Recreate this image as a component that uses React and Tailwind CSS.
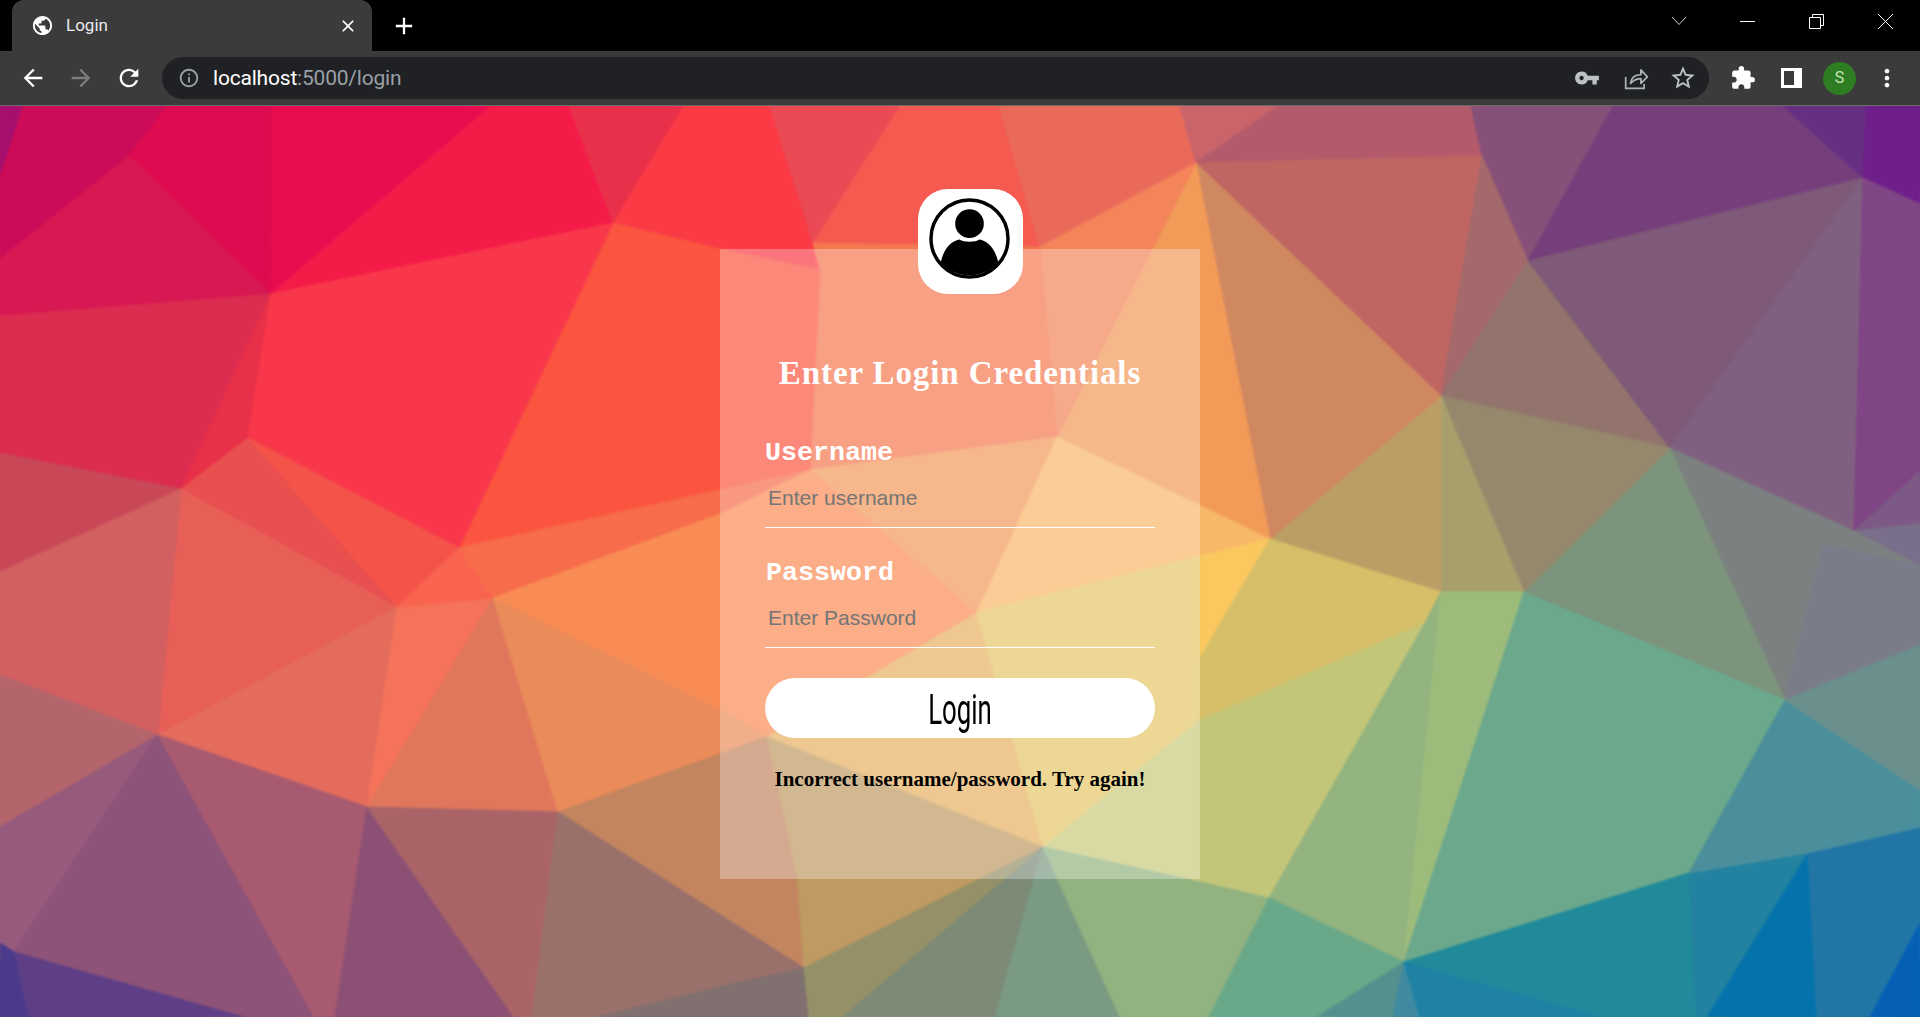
import { MdArrowBack, MdArrowForward, MdRefresh, MdInfoOutline, MdVpnKey, MdStarBorder, MdExtension, MdMoreVert, MdPublic, MdClose, MdAdd } from 'react-icons/md'

// low poly wallpaper, coordinates are page pixels (viewBox starts below the browser toolbar)
const POLYS = [
  ['0,106 168,106 129,156 0,259', '#cc0c58'],
  ['0,106 22,106 0,175', '#a5106f'],
  ['168,106 273,106 271,294 129,156', '#df0b50'],
  ['273,106 491,106 271,294', '#e80d4f'],
  ['0,259 129,156 271,294 0,316', '#d71853'],
  ['491,106 569,106 613,223 271,294', '#f51b49'],
  ['569,106 684,106 613,223', '#e9304b'],
  ['684,106 770,106 813,243 820,270 720,249 613,223', '#fa3a45'],
  ['770,106 900,106 813,243', '#e94a54'],
  ['900,106 999,106 1040,247 813,243', '#f45a50'],
  ['999,106 1180,106 1196,163 1040,247', '#ea6a5a'],
  ['1180,106 1278,106 1196,163', '#c8646a'],
  ['1278,106 1471,106 1482,156 1196,163', '#b45b6b'],
  ['1471,106 1613,106 1528,261 1482,156', '#875079'],
  ['1613,106 1783,106 1863,178 1528,261', '#763f7c'],
  ['1783,106 1866,106 1863,178', '#672f82'],
  ['1866,106 1920,106 1920,204 1863,178', '#6f1f8a'],
  ['1196,163 1482,156 1441,396', '#bf6663'],
  ['1482,156 1528,261 1441,396', '#a4696a'],
  ['1528,261 1670,448 1441,396', '#93746c'],
  ['1528,261 1863,178 1670,448', '#7e5a78'],
  ['1863,178 1854,531 1670,448', '#806080'],
  ['1863,178 1920,204 1920,471 1854,531', '#7f4585'],
  ['1854,531 1920,471 1920,524', '#7d5a85'],
  ['1854,531 1920,524 1920,566', '#7a6f8a'],
  ['1670,448 1854,531 1920,566 1920,645 1785,700', '#7c8080'],
  ['1824,545 1920,566 1920,645 1785,700', '#7a7c8a'],
  ['1670,448 1785,700 1524,592', '#7c937c'],
  ['1441,396 1670,448 1524,592', '#95886c'],
  ['1441,396 1524,592 1441,592', '#a89f6c'],
  ['1441,396 1441,592 1270,539', '#bb9e65'],
  ['1196,163 1441,396 1270,539', '#d08860'],
  ['1196,163 1270,539 1057,437', '#f29a58'],
  ['1040,247 1196,163 1057,437', '#f4845a'],
  ['1040,247 813,243 820,270 810,470 1057,437', '#f47850'],
  ['810,470 1057,437 977,613', '#f4995b'],
  ['1057,437 1270,539 977,613', '#f7b868'],
  ['613,223 720,249 820,270 810,470 459,548', '#fb5540'],
  ['0,316 271,294 248,438 181,489 0,453', '#dc2c50'],
  ['271,294 248,438 181,489', '#e83048'],
  ['271,294 613,223 459,548 248,438', '#f8384a'],
  ['0,453 181,489 0,572', '#c94858'],
  ['181,489 248,438 397,607', '#e84f4f'],
  ['248,438 459,548 397,607', '#f4534a'],
  ['181,489 397,607 158,735', '#e85f58'],
  ['181,489 158,735 0,675 0,572', '#d26060'],
  ['158,735 397,607 367,807', '#e36c5d'],
  ['397,607 493,598 367,807', '#f5735a'],
  ['367,807 493,598 558,812', '#e0775c'],
  ['459,548 493,598 397,607', '#f9644f'],
  ['459,548 810,470 720,514 493,598', '#f76c4a'],
  ['493,598 720,514 810,470 977,613 767,737 720,710', '#f98c55'],
  ['493,598 720,710 767,737 558,812', '#ea8b5a'],
  ['767,737 977,613 1043,847', '#e7b160'],
  ['977,613 1200,556 1200,720 1043,847', '#e6c668'],
  ['1043,847 1200,720 1200,882', '#c9ca7c'],
  ['1270,539 1200,556 1200,658', '#fbc860'],
  ['1270,539 1441,592 1425,623 1200,720 1200,658', '#d6bf68'],
  ['1200,720 1425,623 1269,898 1200,882', '#c3c678'],
  ['1425,623 1441,592 1404,962 1269,898', '#93b37f'],
  ['1441,592 1524,592 1404,962', '#9dbc7c'],
  ['1524,592 1785,700 1689,873 1404,962', '#6ca88c'],
  ['558,812 767,737 797,873 804,968', '#c2855f'],
  ['767,737 1043,847 804,968 797,873', '#bf9a62'],
  ['0,675 158,735 0,827', '#b4656c'],
  ['0,827 158,735 14,952 0,943', '#955a7c'],
  ['158,735 314,1017 243,1017 14,952', '#8d5379'],
  ['158,735 367,807 335,1017 314,1017', '#a85a70'],
  ['367,807 514,1017 335,1017', '#8c5075'],
  ['367,807 558,812 532,1017 514,1017', '#aa6468'],
  ['558,812 804,968 720,987 597,1017 532,1017', '#9a706b'],
  ['597,1017 720,987 804,968 809,1017', '#80706f'],
  ['14,952 243,1017 28,1017', '#5e3f85'],
  ['0,943 14,952 28,1017 0,1017', '#4b3a8c'],
  ['804,968 1043,847 843,1017 809,1017', '#959068'],
  ['1043,847 995,1017 843,1017', '#7c8a76'],
  ['1043,847 1120,1017 995,1017', '#7b9a82'],
  ['1043,847 1200,882 1269,898 1209,1017 1120,1017', '#92b380'],
  ['1269,898 1404,962 1317,1017 1209,1017', '#69a888'],
  ['1404,962 1393,1017 1317,1017', '#55908f'],
  ['1404,962 1420,1017 1393,1017', '#3f8aa0'],
  ['1404,962 1689,873 1696,1017 1420,1017', '#208a9a'],
  ['1404,962 1600,1017 1420,1017', '#1f82a5'],
  ['1689,873 1808,853 1707,1017 1696,1017', '#23829f'],
  ['1808,853 1817,1017 1707,1017', '#0573ab'],
  ['1808,853 1920,827 1920,923 1870,1017 1817,1017', '#2176a6'],
  ['1920,923 1920,1017 1870,1017', '#0560b5'],
  ['1785,700 1920,790 1920,827 1808,853 1689,873', '#4b8f9c'],
  ['1785,700 1920,645 1920,790', '#6b8f8c'],
]

const Shards = () => POLYS.map(([points, fill]) => (
  <polygon key={points} points={points} fill={fill} stroke={fill} strokeWidth="1" />
))

// svg is 4px oversize, with a stretched copy under the real one, so the blur doesn't fade at the page edge
const Wallpaper = () => (
  <svg className="absolute -left-[4px] -top-[4px] w-[calc(100%+8px)] h-[calc(100%+8px)] blur-[1px]" viewBox="-4 102 1928 919">
    <g transform="translate(960 561) scale(1.02) translate(-960 -561)"><Shards /></g>
    <Shards />
  </svg>
)

const ShareIcon = () => (
  <svg width="26" height="26" viewBox="0 0 24 24" fill="none" stroke="#aeb2b6" strokeWidth="1.6">
    <path d="M2.500 11v10.500h17v-4" />
    <path d="M7 17c.5-5 4-8 9.500-8V4.500l6 6.500-6 6v-4.500c-4 0-7 1.500-9.500 4.500z" strokeLinejoin="round" />
  </svg>
)

const BrowserChrome = () => (
  <div className="shrink-0 bg-[#3b3b3b]">
    <div className="h-[51px] bg-black flex items-end">
      <div className="ml-[12px] w-[360px] h-[51px] bg-[#3b3b3b] rounded-t-[12px] flex items-center pl-[19px] pr-[14px] gap-[12px]">
        <MdPublic className="text-white" size={23} />
        <span className="flex-1 text-[17px] text-[#e8eaed] font-['Roboto',sans-serif]">Login</span>
        <MdClose className="text-white" size={20} />
      </div>
      <div className="w-[64px] h-[51px] flex items-center justify-center">
        <MdAdd className="text-white" size={28} />
      </div>
      <div className="flex-1 h-full flex items-center justify-end pb-[9px]">
        <svg className="mr-[53px]" width="16" height="10" viewBox="0 0 16 10" fill="none" stroke="#ccc"><path d="M1 1l7 7.500L15 1" /></svg>
        <span className="w-[15px] h-px bg-white mr-[54px]" />
        <svg className="mr-[54px]" width="15" height="15" viewBox="0 0 15 15" fill="none" stroke="#fff"><path d="M.5 3.500h11v11H.5z" /><path d="M3.500 3.500v-3h11v11h-3" /></svg>
        <svg className="mr-[27px]" width="15" height="15" viewBox="0 0 15 15" fill="none" stroke="#fff"><path d="M0 0l15 15M15 0L0 15" /></svg>
      </div>
    </div>
    <div className="h-[55px] flex items-center border-b border-[#8a8a8a]/60">
      <div className="w-[162px] flex items-center pl-[19px] gap-[20px]">
        <MdArrowBack className="text-white" size={28} />
        <MdArrowForward className="text-[#7d7d7d]" size={28} />
        <MdRefresh className="text-white" size={28} />
      </div>
      <div className="w-[1547px] h-[42px] rounded-full bg-[#202124] flex items-center pl-[16px] pr-[12px]">
        <MdInfoOutline className="text-[#9aa0a6]" size={22} />
        <span className="ml-[13px] flex-1 pt-[1px] text-[21px] tracking-[-0.2px] text-[#9aa0a6] font-['Roboto',sans-serif]">
          <span className="text-white">localhost</span>:5000/login
        </span>
        <MdVpnKey className="text-[#bdc1c6]" size={26} />
        <span className="ml-[23px] mr-[20px]"><ShareIcon /></span>
        <MdStarBorder className="text-[#bdc1c6]" size={28} />
      </div>
      <div className="flex-1 flex items-center pl-[21px]">
        <MdExtension className="text-white" size={26} />
        <span className="ml-[25px] w-[21px] h-[20px] border-[3px] border-white border-r-[8px]" />
        <span className="ml-[21px] w-[33px] h-[33px] rounded-full bg-[#2e7d23] text-[#c8e6b8] text-[16px] flex items-center justify-center font-['Roboto',sans-serif]">S</span>
        <MdMoreVert className="text-white ml-[17px]" size={28} />
      </div>
    </div>
  </div>
)

const Field = ({ label, placeholder, labelClass }) => (
  <div>
    <div className={`font-['Liberation_Mono',monospace] font-bold text-[26.67px] leading-[30px] text-white ${labelClass}`}>{label}</div>
    <input
      readOnly
      placeholder={placeholder}
      className="mt-[1px] block w-full h-[59px] pl-[3px] pb-[1px] border-b border-white bg-transparent outline-none text-[21px] font-['Liberation_Sans',sans-serif] placeholder-[#757575]"
    />
  </div>
)

const App = () => (
  <div className="h-[1017px] overflow-hidden flex flex-col">
    <BrowserChrome />
    <main className="relative flex-1 flex justify-center pt-[143px] overflow-hidden">
      <Wallpaper />
      <div className="relative w-[480px] h-[630px] bg-white/30 px-[45px] pt-[104px]">
        <div className="absolute -top-[60px] left-[198px] w-[105px] h-[105px] bg-white rounded-[30px] pl-[11px] pt-[9px]">
          <svg width="81" height="81" viewBox="0 0 82 82">
            <circle cx="41" cy="41" r="39" fill="#fff" stroke="#000" strokeWidth="3.500" />
            <circle cx="41" cy="26" r="14.500" />
            <path d="M12 65C15 50 24 43 31 42C35 45 47 45 51 42C58 43 67 50 70 65A38 38 0 0 1 12 65Z" />
          </svg>
        </div>
        <h1 className="text-center font-['Liberation_Serif',serif] font-bold text-[33px] leading-[40px] tracking-[0.9px] text-white">Enter Login Credentials</h1>
        <div className="mt-[45px] flex flex-col gap-[30px]">
          <Field label="Username" placeholder="Enter username" labelClass="" />
          <Field label="Password" placeholder="Enter Password" labelClass="pl-[1px]" />
        </div>
        <button className="mt-[30px] w-full h-[60px] rounded-full bg-white flex items-center justify-center text-black pt-[3px]">
          <span className="inline-block scale-x-[0.6] font-['Roboto',sans-serif] text-[43px] leading-none">Login</span>
        </button>
        <p className="mt-[28px] text-center font-['Liberation_Serif',serif] font-bold text-[21px] leading-[26px] text-black">Incorrect username/password. Try again!</p>
      </div>
    </main>
  </div>
)

export default App
